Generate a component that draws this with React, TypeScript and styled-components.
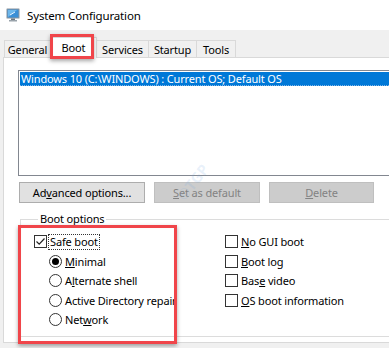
import React from "react";
import styled, { createGlobalStyle } from "styled-components";

const GlobalStyle = createGlobalStyle`
  html, body { margin: 0; padding: 0; background: #f0f0f0; }
  body { font-family: "Noto Sans", "Open Sans", sans-serif; font-size: 11px; letter-spacing: -0.15px; color: #000; }
  * { box-sizing: border-box; }
`;

const Window = styled.div`
  position: relative;
  width: 389px;
  height: 348px;
  overflow: hidden;
  background: #f0f0f0;
`;

const TitleBar = styled.div`
  height: 30px;
  background: #fff;
  display: flex;
  align-items: center;
  padding-left: 6px;
  gap: 7px;
`;

const Title = styled.span`
  font-size: 11.5px;
  line-height: 16px;
  padding-top: 1px;
`;

const Body = styled.div`
  padding: 0 0 0 3px;
`;

const TabStrip = styled.div`
  height: 27px;
  display: flex;
  align-items: flex-end;
  padding-left: 1px;
  position: relative;
  z-index: 2;
`;

const Tab = styled.div<{ $w: number; $active?: boolean }>`
  width: ${(p) => p.$w}px;
  height: ${(p) => (p.$active ? 21 : 17)}px;
  margin-bottom: ${(p) => (p.$active ? -1 : 0)}px;
  background: ${(p) => (p.$active ? "#fff" : "#f0f0f0")};
  border: 1px solid #d9d9d9;
  border-bottom: none;
  margin-left: -1px;
  display: flex;
  justify-content: center;
  align-items: ${(p) => (p.$active ? "flex-start" : "center")};
  padding-top: ${(p) => (p.$active ? 2 : 0)}px;
  font-size: 11px;
  line-height: 15px;
  &:first-child { margin-left: 0; }
`;

const Panel = styled.div`
  height: 286px;
  background: #fff;
  border: 1px solid #d9d9d9;
  border-right: none;
  padding: 12px 0 0 14px;
  position: relative;
  z-index: 1;
`;

const ListBox = styled.div`
  height: 106px;
  border: 1px solid #828790;
  border-right: none;
  padding: 1px 0 0 1px;
`;

const ListItem = styled.div`
  height: 14px;
  line-height: 13px;
  background: #0078d7;
  color: #fff;
  padding-left: 1px;
  border-bottom: 1px dotted #7fb6e8;
  white-space: nowrap;
  font-size: 11px;
`;

const ButtonRow = styled.div`
  display: flex;
  gap: 9px;
  margin: 6px 0 0 1px;
`;

const Button = styled.div<{ $w: number; $disabled?: boolean }>`
  width: ${(p) => p.$w}px;
  height: 21px;
  display: flex;
  align-items: center;
  justify-content: center;
  font-size: 11px;
  background: ${(p) => (p.$disabled ? "#cccccc" : "#e1e1e1")};
  border: 1px solid ${(p) => (p.$disabled ? "#bfbfbf" : "#adadad")};
  color: ${(p) => (p.$disabled ? "#838383" : "#000")};
`;

const GroupBox = styled.fieldset`
  margin: 9px 0 0 2px;
  padding: 6px 0 0 13px;
  height: 125px;
  border: 1px solid #dcdcdc;
  border-right: none;
  display: grid;
  grid-template-columns: 191px 1fr;
  align-content: start;
`;

const Legend = styled.legend`
  padding: 0 2px;
  margin-left: 4px;
  font-size: 11px;
  line-height: 14px;
`;

const Col = styled.div`
  display: flex;
  flex-direction: column;
`;

const Option = styled.div<{ $indent?: number }>`
  height: 19.5px;
  display: flex;
  align-items: center;
  gap: 3px;
  padding-left: ${(p) => p.$indent ?? 0}px;
  font-size: 11px;
  white-space: nowrap;
`;

const Focus = styled.span`
  outline: 1px dotted #333;
  outline-offset: 0px;
  line-height: 14px;
  padding: 0 1px;
  margin-left: -1px;
`;

const Box = styled.span`
  width: 13px;
  height: 13px;
  border: 1px solid #333;
  background: #fff;
  flex: none;
  display: flex;
  align-items: center;
  justify-content: center;
`;

const Radio = styled.span<{ $on?: boolean }>`
  width: 13px;
  height: 13px;
  border: 1px solid #333;
  border-radius: 50%;
  background: #fff;
  flex: none;
  display: flex;
  align-items: center;
  justify-content: center;
  &::after {
    content: "";
    width: 7px;
    height: 7px;
    border-radius: 50%;
    background: ${(p) => (p.$on ? "#000" : "transparent")};
  }
`;

const Highlight = styled.div<{ $x: number; $y: number; $w: number; $h: number }>`
  position: absolute;
  left: ${(p) => p.$x}px;
  top: ${(p) => p.$y}px;
  width: ${(p) => p.$w}px;
  height: ${(p) => p.$h}px;
  border: 3px solid #f0454a;
  box-shadow: 0 2px 4px rgba(0, 0, 0, 0.35), inset 0 0 1px rgba(0,0,0,0.1);
  z-index: 5;
  pointer-events: none;
`;

const Watermark = styled.div`
  position: absolute;
  left: 172px;
  top: 172px;
  transform: rotate(-52deg);
  font-family: "Open Sans", sans-serif;
  font-weight: 700;
  font-size: 15px;
  color: rgba(120, 170, 225, 0.16);
  z-index: 4;
  pointer-events: none;
`;

const AppIcon = () => (
  <svg width="14" height="14" viewBox="0 0 14 14">
    <rect x="0.5" y="0.5" width="13" height="10" rx="0.5" fill="#8a949e" />
    <rect x="1.5" y="1.5" width="11" height="8" fill="#3b8fd6" />
    <path d="M2 2 L11 2 L2 9 Z" fill="#7cc0f0" opacity="0.8" />
    <path d="M4 7 L9 4" stroke="#e8f4ff" strokeWidth="1" />
    <rect x="5" y="10.5" width="4" height="1.5" fill="#707880" />
    <rect x="3" y="12" width="8" height="1.5" fill="#9aa3ab" />
  </svg>
);

const Check = () => (
  <svg width="11" height="11" viewBox="0 0 11 11">
    <path d="M1.5 5.5 L4.2 8.2 L9.5 2.5" fill="none" stroke="#222" strokeWidth="1.2" />
  </svg>
);

export default function App() {
  return (
    <>
      <GlobalStyle />
      <Window>
        <TitleBar>
          <AppIcon />
          <Title>System Configuration</Title>
        </TitleBar>
        <Body>
          <TabStrip>
            <Tab $w={47}>General</Tab>
            <Tab $w={47} $active>Boot</Tab>
            <Tab $w={53}>Services</Tab>
            <Tab $w={49}>Startup</Tab>
            <Tab $w={40}>Tools</Tab>
          </TabStrip>
          <Panel>
            <ListBox>
              <ListItem>Windows 10 (C:\WINDOWS) : Current OS; Default OS</ListItem>
            </ListBox>
            <ButtonRow>
              <Button $w={126}>Ad<u>v</u>anced options...</Button>
              <Button $w={106} $disabled><u>S</u>et as default</Button>
              <Button $w={105} $disabled><u>D</u>elete</Button>
            </ButtonRow>
            <GroupBox>
              <Legend>Boot options</Legend>
              <Col>
                <Option>
                  <Box><Check /></Box>
                  <Focus>Safe boot</Focus>
                </Option>
                <Option $indent={15}>
                  <Radio $on />
                  <span><u>M</u>inimal</span>
                </Option>
                <Option $indent={15}>
                  <Radio />
                  <span>A<u>l</u>ternate shell</span>
                </Option>
                <Option $indent={15}>
                  <Radio />
                  <span>Active Directory repair</span>
                </Option>
                <Option $indent={15}>
                  <Radio />
                  <span>Net<u>w</u>ork</span>
                </Option>
              </Col>
              <Col>
                <Option>
                  <Box />
                  <span><u>N</u>o GUI boot</span>
                </Option>
                <Option>
                  <Box />
                  <span><u>B</u>oot log</span>
                </Option>
                <Option>
                  <Box />
                  <span>Bas<u>e</u> video</span>
                </Option>
                <Option>
                  <Box />
                  <span><u>O</u>S boot information</span>
                </Option>
              </Col>
            </GroupBox>
          </Panel>
        </Body>
        <Watermark>©TGP</Watermark>
        <Highlight $x={50} $y={34} $w={44} $h={25} />
        <Highlight $x={18} $y={225} $w={159} $h={119} />
      </Window>
    </>
  );
}
